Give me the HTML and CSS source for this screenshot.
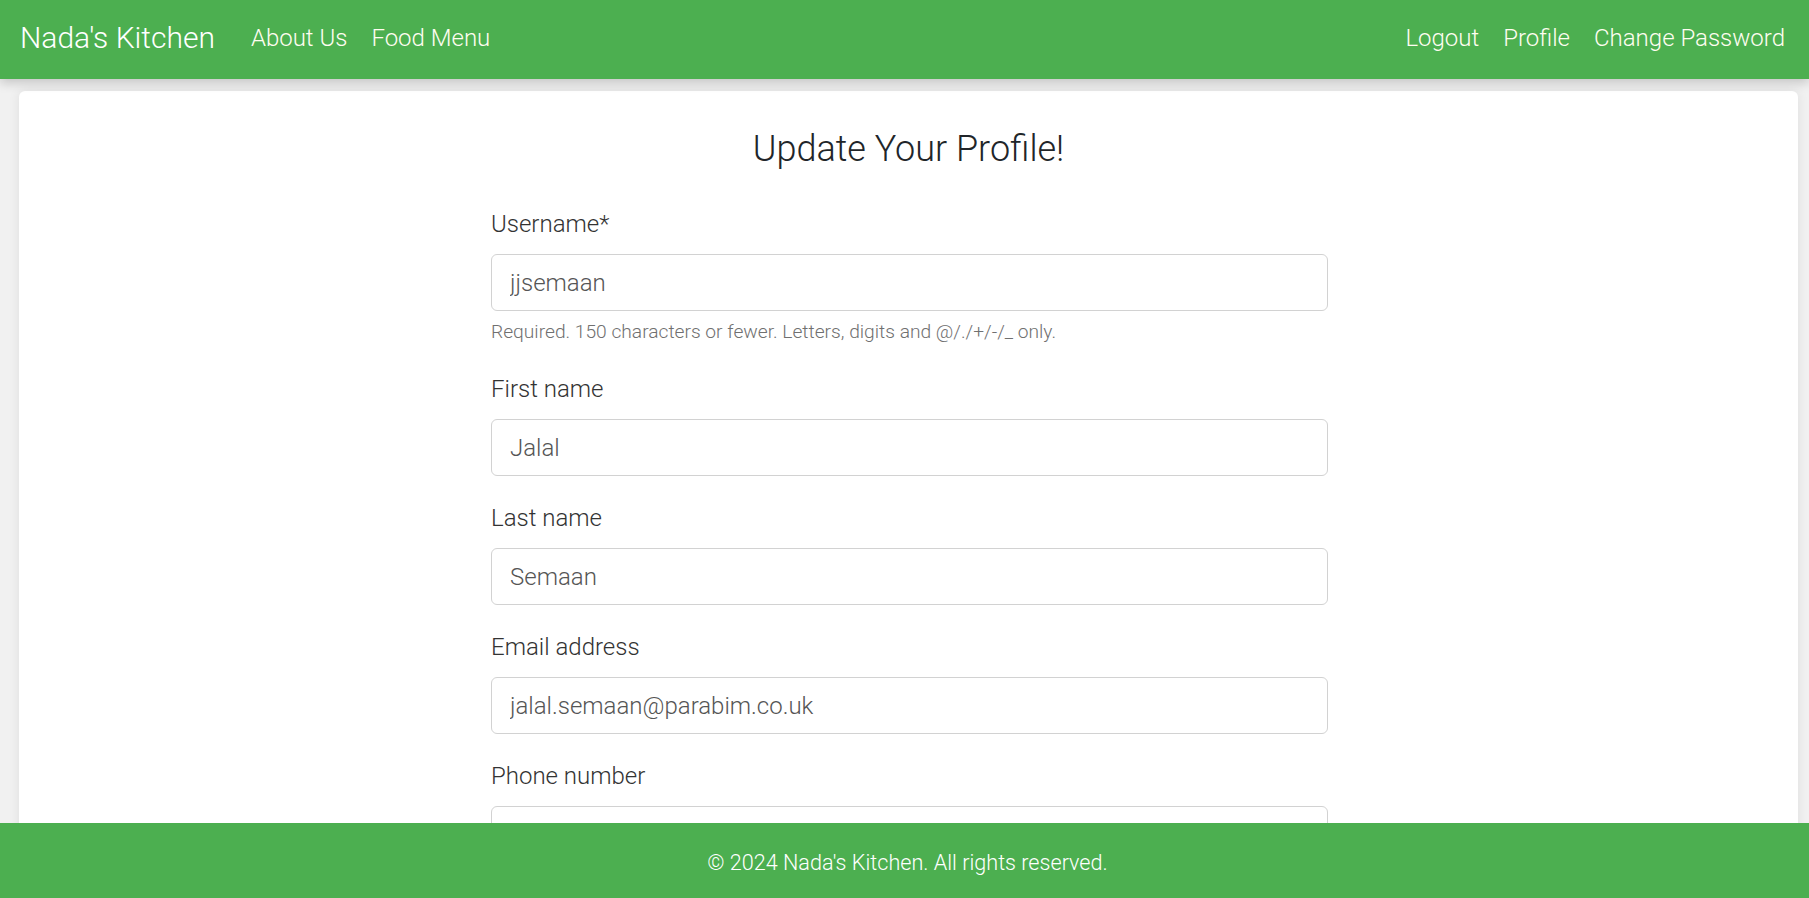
FILE: index.html
```html
<!DOCTYPE html>
<html lang="en">
<head>
<meta charset="utf-8">
<title>Update Your Profile - Nada's Kitchen</title>
<link rel="stylesheet" href="styles.css">
</head>
<body>
<nav class="navbar">
  <div class="nav-left">
    <a class="brand" href="#">Nada's Kitchen</a>
    <a class="nav-link" href="#">About Us</a>
    <a class="nav-link" href="#">Food Menu</a>
  </div>
  <div class="nav-right">
    <a class="nav-link" href="#">Logout</a>
    <a class="nav-link" href="#">Profile</a>
    <a class="nav-link" href="#">Change Password</a>
  </div>
</nav>
<main class="page">
  <section class="card">
    <h2 class="title">Update Your Profile!</h2>
    <form class="form">
      <div class="field">
        <label class="label">Username*</label>
        <input class="input" type="text" value="jjsemaan">
        <div class="help">Required. 150 characters or fewer. Letters, digits and @/./+/-/_ only.</div>
      </div>
      <div class="field">
        <label class="label">First name</label>
        <input class="input" type="text" value="Jalal">
      </div>
      <div class="field">
        <label class="label">Last name</label>
        <input class="input" type="text" value="Semaan">
      </div>
      <div class="field">
        <label class="label">Email address</label>
        <input class="input" type="text" value="jalal.semaan@parabim.co.uk">
      </div>
      <div class="field">
        <label class="label">Phone number</label>
        <input class="input" type="text" value="">
      </div>
    </form>
  </section>
</main>
<footer class="footer">
  <p class="footer-text">© 2024 Nada's Kitchen. All rights reserved.</p>
</footer>
</body>
</html>
```
FILE: styles.css
```css
* { box-sizing: border-box; }
html, body { margin: 0; padding: 0; }
body {
  font-family: Roboto, "Noto Sans", sans-serif;
  font-weight: 300;
  background: #f1f1f1;
  color: #212529;
  overflow: hidden;
  height: 898px;
}
a { text-decoration: none; }

.navbar {
  height: 79px;
  background: #4caf50;
  display: flex;
  align-items: center;
  justify-content: space-between;
  padding: 0 12px 3px 20px;
  box-shadow: 0 4px 10px rgba(0,0,0,0.18);
  position: relative;
  z-index: 2;
}
.nav-left, .nav-right { display: flex; align-items: center; }
.brand {
  color: #fff;
  font-size: 30px;
  font-weight: 300;
  margin-right: 24px;
  line-height: 1.2;
}
.nav-link {
  color: #fffdf0;
  font-size: 24px;
  font-weight: 300;
  padding: 0 12px;
  line-height: 1.5;
}

.page {
  padding: 12px 11px 0 19px;
}
.card {
  background: #fff;
  border-radius: 6px;
  box-shadow: 0 0 12px rgba(0,0,0,0.08);
  padding: 37px 0 60px;
  display: flex;
  flex-direction: column;
  align-items: center;
  min-height: 900px;
}
.title {
  margin: 0 0 35px;
  font-size: 36px;
  font-weight: 300;
  line-height: 1.2;
  color: #212529;
  text-align: center;
}
.form {
  width: 837px;
  margin-left: 2px;
}
.field { margin-bottom: 24px; }
.label {
  display: block;
  font-size: 24px;
  line-height: 36px;
  color: #333;
  margin-bottom: 12px;
}
.input {
  display: block;
  width: 100%;
  height: 57px;
  padding: 0 18px;
  font-family: Roboto, "Noto Sans", sans-serif;
  font-weight: 300;
  font-size: 24px;
  color: #555;
  background: #fff;
  border: 1.5px solid #d2d2d2;
  border-radius: 6px;
  outline: none;
}
.help {
  margin-top: 6px;
  font-size: 19.2px;
  line-height: 30px;
  color: #707070;
}

.footer {
  position: fixed;
  left: 0;
  right: 0;
  bottom: 0;
  height: 75px;
  background: #4caf50;
  display: flex;
  align-items: center;
  justify-content: center;
  padding: 4px 0 0 6px;
  z-index: 3;
}
.footer-text {
  margin: 0;
  color: #fff;
  font-size: 21.6px;
  font-weight: 300;
}
```
